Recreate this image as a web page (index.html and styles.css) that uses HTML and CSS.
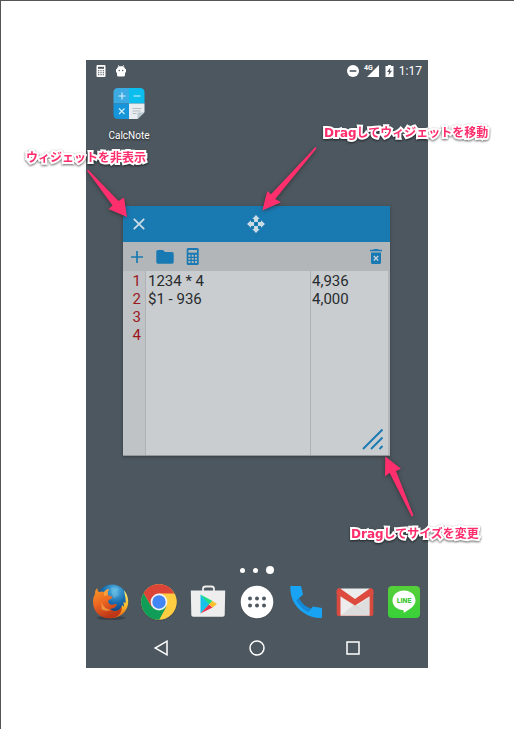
FILE: index.html
```html
<!DOCTYPE html>
<html lang="ja">
<head>
<meta charset="utf-8">
<meta name="viewport" content="width=device-width, initial-scale=1">
<title>CalcNote</title>
<link rel="stylesheet" href="styles.css">
</head>
<body>
<main class="stage">
  <section class="phone">
    <header class="status">
      <svg width="10" height="12" viewBox="0 0 10 12"><rect x=".5" width="9" height="12" rx="1" fill="#fff"/><path d="M2 1.8h6v2H2z" fill="#4d575f"/><path d="M2 5.8h6M2 7.8h6M2 9.8h6" stroke="#4d575f" stroke-width="1.1" stroke-dasharray="1.3 1.05"/></svg>
      <svg class="droid" width="12" height="12" viewBox="0 0 12 12"><path d="M1 4h1C2 2.700 2.800 2 3.700 1.500L3 .4l.5-.3.9 1.100h3.200L8.500.100l.5.3-.7 1.100C9.200 2 10 2.700 10 4h1v3.500h-1V10q0 1.500-1.500 1.500h-5Q2 11.500 2 10V7.500H1z" fill="#fff"/><circle cx="4.300" cy="5.500" r=".7" fill="#4d575f"/><circle cx="7.700" cy="5.500" r=".7" fill="#4d575f"/></svg>
      <span class="spacer"></span>
      <svg width="12" height="12" viewBox="0 0 12 12"><circle cx="6" cy="6" r="6" fill="#fff"/><path d="M2.700 6h6.600" stroke="#4d575f" stroke-width="1.600"/></svg>
      <span class="signal"><span class="net">4G</span><svg width="12" height="12" viewBox="0 0 12 12"><path d="M12 0v12H0z" fill="#fff"/></svg></span>
      <svg width="9" height="12" viewBox="0 0 9 12"><path d="M3 0h3v1h2.500v11H.5V1H3z" fill="#fff"/><path d="M5.500 2.500 2 7h2l-.6 3.500L7 5.700H4.900z" fill="#4d575f"/></svg>
      <time class="clock">1:17</time>
    </header>

    <div class="home">
      <a class="app" href="#calcnote">
        <svg width="32" height="32" viewBox="0 0 32 32"><path d="M5 1h11v15.500H.5V5.500Q.5 1 5 1z" fill="#3dabe3"/><path d="M16 1h11q4.500 0 4.500 4.500v11H16z" fill="#0bbeed"/><path d="M.5 16.500H16V32H5Q.5 32 .5 27.500z" fill="#1695da"/><path d="M16 16.500h15.500V25l-7 7H16z" fill="#e7edf0"/><path d="M24.500 32v-6.500h7z" fill="#b9c9cf"/><path d="M5.500 9h7M9 5.500v7M20.500 9h7" stroke="#d5f1fc" stroke-width="1.100"/><path d="m6 21.500 5.500 5.500m0-5.500L6 27" stroke="#d5f1fc" stroke-width="1.100"/><path d="M19.500 21.500h9M19.500 24h8M19.500 26.500h4" stroke="#b4bec3"/></svg>
        <span>CalcNote</span>
      </a>
    </div>

    <section class="widget" aria-label="CalcNote">
      <div class="titlebar">
        <button class="close" aria-label="閉じる"><svg width="14" height="14" viewBox="0 0 14 14"><path d="m1.800 1.800 10.400 10.400m0-10.400L1.800 12.200" stroke="#cbdbe4" stroke-width="1.800"/></svg></button>
        <button class="move" aria-label="移動"><svg width="18" height="18" viewBox="0 0 18 18" fill="#cbdbe4"><path d="M9 0l3.800 4H11v3H7V4H5.200zM9 18l-3.800-4H7v-3h4v3h1.800zM0 9l4-3.800V7h3v4H4v1.800zM18 9l-4 3.800V11h-3V7h3V5.200z"/></svg></button>
      </div>
      <div class="toolbar">
        <button aria-label="追加"><svg width="14" height="14" viewBox="0 0 14 14"><path d="M7 1v12M1 7h12" stroke="#197ab3" stroke-width="1.700"/></svg></button>
        <button aria-label="フォルダ"><svg width="18" height="14" viewBox="0 0 18 14"><path d="M2 0h5l2 2h7q1.700 0 1.700 1.700V12q0 1.700-1.700 1.700H2Q.3 13.700.3 12V1.700Q.3 0 2 0z" fill="#197ab3"/></svg></button>
        <button aria-label="電卓"><svg width="13" height="17" viewBox="0 0 13 17"><rect x=".7" width="12" height="17" rx="1.500" fill="#197ab3"/><path d="M2.400 2H11v2.700H2.400z" fill="#b2b6b9"/><path d="M2.400 7.800h8.600M2.400 10.900h8.600M2.400 14h8.600" stroke="#b2b6b9" stroke-width="1.900" stroke-dasharray="2 1.300"/></svg></button>
        <span class="spacer"></span>
        <button aria-label="削除"><svg width="12" height="15" viewBox="0 0 12 15"><path d="M0 .8h3.500L4 0h4l.5.800H12v1.500H0zM1 3.500h10v10q0 1.500-1.500 1.500h-7Q1 15 1 13.500z" fill="#197ab3"/><path d="m3.800 7 4.400 4.400m0-4.400-4.400 4.400" stroke="#c5d1d8" stroke-width="1.400"/></svg></button>
      </div>
      <div class="sheet">
        <div class="gutter">1<br>2<br>3<br>4</div>
        <textarea class="notes" aria-label="計算式" spellcheck="false">1234 * 4
$1 - 936</textarea>
        <output class="results">4,936<br>4,000</output>
        <svg class="grip" width="22" height="22" viewBox="0 0 22 22"><path d="M1 21 20.500 1.500M9 21 20.500 9.500M17.500 21l3-3" stroke="#197ab3" stroke-width="1.900"/></svg>
      </div>
    </section>

    <div class="pager"><i></i><i></i><i class="current"></i></div>

    <nav class="dock" aria-label="アプリ">
      <a href="#firefox" aria-label="Firefox"><svg width="38" height="38" viewBox="0 0 38 38">
        <defs>
          <radialGradient id="globe" cx=".6" cy=".2" r=".8"><stop offset="0" stop-color="#59bce9"/><stop offset=".5" stop-color="#176aac"/><stop offset="1" stop-color="#142e67"/></radialGradient>
          <linearGradient id="fur" x1="0" y1="0" x2=".4" y2="1"><stop offset="0" stop-color="#f79a26"/><stop offset=".5" stop-color="#ed6822"/><stop offset="1" stop-color="#bd3618"/></linearGradient>
          <linearGradient id="tail" x1="0" y1="0" x2="0" y2="1"><stop offset="0" stop-color="#fff178"/><stop offset=".6" stop-color="#f8b526"/><stop offset="1" stop-color="#df5b1b"/></linearGradient>
        </defs>
        <g transform="translate(1 0)">
        <ellipse cx="19" cy="35" rx="14" ry="2" fill="#3b4248"/>
        <circle cx="20" cy="17" r="15.500" fill="url(#globe)"/>
        <path d="M19 5q5-2 8 1l-3 3 3 3-5 3-2-4z" fill="#72c0df" opacity=".5"/>
        <path d="M32 7.500c5 5 6 15 .5 21.500-4 5-11 7-17 5l5-6c6 1 9-2 9.500-6l2 2-.5-5 2 1c.5-4-.5-8-1.500-12.500z" fill="url(#tail)"/>
        <path d="M5 5q.5 3 2 4 3-1 5 0 2-3 5-3-2 3-1 6 2 1.500 4.500 1.500-.5 2.500-4 3.500-1 2 1 4c2.500 2 4-.5 7 0 1 1-2 5-6.500 5 4 4 10 2 12-3 0 7-4 11-9 12C9 37 1 29 1 19q0-5 2-8Q3 7 5 5z" fill="url(#fur)"/>
        <path d="M12 9q2-3 5-3-2 3-1 6l-4 1zM9.500 19q2 7 10 8-7 2-10-1z" fill="#fbb34b" opacity=".65"/>
        </g>
      </svg></a>
      <a href="#chrome" aria-label="Chrome"><svg width="38" height="38" viewBox="0 0 38 38">
        <ellipse cx="19" cy="20" rx="18" ry="17.800" fill="#404950"/><circle cx="19" cy="19" r="17.800" fill="#ffcd42"/>
        <path d="M3.600 10.100A17.800 17.800 0 0 0 19.200 36.800L26.500 23.500 19 19 11.500 23.500z" fill="#0f9d58"/>
        <path d="M3.600 10.100A17.800 17.800 0 0 1 34.500 10.500H19L11.500 23.500z" fill="#db4437"/>
        <circle cx="19" cy="19" r="8.400" fill="#f1f1f1"/><circle cx="19" cy="19" r="6.700" fill="#4285f4"/>
      </svg></a>
      <a href="#play" aria-label="Play"><svg width="36" height="38" viewBox="0 0 36 38">
        <rect x="13" y="3.500" width="11" height="7" rx="2.500" fill="none" stroke="#eeeeef" stroke-width="1.800"/>
        <path d="M.8 7.500h34.400L34.700 32q0 1.700-2 1.700H3.300q-2 0-2-1.700z" fill="#eeeeef"/>
        <path d="M10.500 11.500v19l9-9.500z" fill="#18c1e8"/><path d="m10.500 11.500 12 6.500-3.500 3.500z" fill="#20dc85"/><path d="m10.500 30.500 8.500-9 3.500 2.900z" fill="#e8324c"/><path d="M22.500 18 27 21l-4.500 3.400L19 21.300z" fill="#fcc12d"/>
      </svg></a>
      <a href="#apps" aria-label="アプリ一覧"><svg width="38" height="38" viewBox="0 0 38 38"><circle cx="19" cy="20" r="16.300" fill="#424b52"/><circle cx="19" cy="19" r="16.300" fill="#fff"/><g fill="#4d5860"><circle cx="12" cy="15.500" r="2"/><circle cx="19" cy="15.500" r="2"/><circle cx="26" cy="15.500" r="2"/><circle cx="12" cy="22.500" r="2"/><circle cx="19" cy="22.500" r="2"/><circle cx="26" cy="22.500" r="2"/></g></svg></a>
      <a href="#phone" aria-label="電話"><svg width="38" height="38" viewBox="0 0 38 38"><path d="M3.300 3H14l2 8.500-6.500 6Q15 26 21.500 28.500L26 23.500l9 1.500v10Q24 35.500 15.500 29 3 20 3.300 3z" fill="#18a3f4"/><path d="m9.500 17.500 2.500-2.300q4 8 12 10.300l-2.500 3Q14 25 9.500 17.500z" fill="#128bdc"/></svg></a>
      <a href="#gmail" aria-label="Gmail"><svg width="38" height="38" viewBox="0 0 38 38"><rect x=".7" y="6" width="36.600" height="27" rx="2" fill="#d94a3e"/><path d="M4.500 5.500h29V32.500h-29z" fill="#ededed"/><path d="M4.500 32.500 19 21l14.500 11.500z" fill="#dcdcdc"/><path d="M4.500 14 19 24l14.500-10v18.500z" fill="#d3d3d3" opacity=".6"/><path d="M.7 11V7.500Q1 5 3.500 5L19 16 34.500 5q2.500 0 2.800 2.500V11L19 22.500z" fill="#dd4b3e"/></svg></a>
      <a href="#line" aria-label="LINE"><svg width="34" height="34" viewBox="0 0 34 34"><defs><linearGradient id="lime" x1="0" y1="0" x2="0" y2="1"><stop offset="0" stop-color="#56cf39"/><stop offset="1" stop-color="#38d039"/></linearGradient></defs><rect x="1" y="1" width="32" height="32" rx="4" fill="url(#lime)"/><path d="M17 5.500c6.500 0 11.500 4.200 11.500 10 0 5-5 8.500-12 12.500.7-2 .3-2.800-1-3C9.500 24.500 5.500 20.500 5.500 15.500c0-5.800 5-10 11.500-10z" fill="#fff"/><text x="17" y="18" class="line-word">LINE</text></svg></a>
    </nav>

    <nav class="keys" aria-label="ナビゲーション">
      <button aria-label="戻る"><svg width="16" height="16" viewBox="0 0 16 16"><path d="M14 1.200v13.600L2.200 8z"/></svg></button>
      <button aria-label="ホーム"><svg width="16" height="16" viewBox="0 0 16 16"><circle cx="8" cy="8" r="7"/></svg></button>
      <button aria-label="履歴"><svg width="16" height="16" viewBox="0 0 16 16"><path d="M2 2h12v12H2z"/></svg></button>
    </nav>
  </section>

  <svg class="arrows" width="514" height="729" viewBox="0 0 514 729" aria-hidden="true">
    <path d="M88 169.500 118.500 201 124 197.500 127 217 108.500 209 112.500 205.500 87 170.500z"/>
    <path d="M315.500 147 271 194.300 267.300 191 262.300 210.500 281 202.300 275.300 199 316.500 148.500z"/>
    <path d="M385.300 456.500 385 476.300 389.700 473 411.700 516.500 413.500 515.500 396 471 401 468.700z"/>
  </svg>
  <p class="note note-hide">ウィジェットを非表示</p>
  <p class="note note-move">Dragしてウィジェットを移動</p>
  <p class="note note-size">Dragしてサイズを変更</p>
</main>
</body>
</html>
```

FILE: styles.css
```css
* { box-sizing: border-box; }

body {
  margin: 0;
  background: #fff;
  font-family: Roboto, "Noto Sans CJK JP", sans-serif;
}

svg { display: block; }

button {
  padding: 0;
  border: 0;
  background: none;
  cursor: pointer;
}

.stage {
  position: relative;
  min-height: 100vh;
  padding: 59px 86px 60px 85px;
  border-top: 1px solid #555;
  border-left: 1px solid #555;
}

.phone {
  display: flex;
  flex-direction: column;
  background: #4d575f;
}

.spacer { flex: 1; }

.status {
  display: flex;
  align-items: center;
  height: 22px;
  padding: 0 6px 0 10px;
  color: #fff;
}

.droid { margin-left: 9px; }

.signal {
  display: flex;
  margin: 0 6px 0 5px;
}

.net {
  margin-right: -6px;
  font-size: 7px;
  font-weight: 700;
  line-height: 6px;
}

.clock {
  margin-left: 5px;
  font-size: 12px;
}

.home {
  height: 124px;
  padding: 5px 19px;
}

.app {
  display: inline-flex;
  flex-direction: column;
  align-items: center;
  gap: 10px;
  width: 48px;
  color: #fff;
  font-size: 10px;
  line-height: 14px;
  text-decoration: none;
  text-shadow: 0 1px 2px #222;
}

.widget {
  margin: 0 38px 0 37px;
  border-bottom: 1px solid #92989c;
  background: #b2b6b9;
  box-shadow: 0 1px 3px #353d43;
}

.titlebar {
  display: grid;
  grid-template-columns: 1fr auto 1fr;
  align-items: center;
  height: 36px;
  padding: 0 10px 0 9px;
  background: #197ab1;
}

.close { justify-self: start; }

.toolbar {
  display: flex;
  align-items: center;
  gap: 12px;
  height: 29px;
  padding: 0 8px 0 7px;
}

.sheet {
  position: relative;
  display: grid;
  grid-template-columns: 23px 2fr minmax(0, 78px);
  height: 184px;
  border-right: 2px solid #b2b6b9;
  background: #c9cdd0;
  color: #282b2d;
  font-size: 15px;
  line-height: 18px;
}

.gutter {
  padding: 1px 4px 0 0;
  border-right: 1px solid #aeb2b5;
  background: #bfc3c6;
  color: #9c171d;
  text-align: right;
}

.notes {
  width: 100%;
  min-width: 0;
  height: 100%;
  padding: 1px 2px 0;
  border: 0;
  outline: 0;
  resize: none;
  background: none;
  color: inherit;
  font: inherit;
}

.results {
  padding: 1px 0 0 1px;
  border-left: 1px solid #aeb2b5;
}

.grip {
  position: absolute;
  right: 4px;
  bottom: 5px;
}

.pager {
  display: flex;
  justify-content: center;
  align-items: center;
  gap: 8px;
  height: 12px;
  margin-top: 108px;
}

.pager i {
  width: 5px;
  height: 5px;
  border-radius: 50%;
  background: #fff;
}

.pager .current {
  width: 8px;
  height: 8px;
}

.dock {
  display: grid;
  grid-template-columns: repeat(7, 1fr);
  place-items: center;
  height: 52px;
}

.line-word {
  fill: #45c837;
  font-family: Roboto, sans-serif;
  font-size: 7px;
  font-weight: 900;
  text-anchor: middle;
}

.keys {
  display: grid;
  grid-template-columns: repeat(3, 1fr);
  place-items: center;
  height: 40px;
  padding: 0 27px;
}

.keys svg {
  fill: none;
  stroke: #fff;
  stroke-width: 1.5;
}

.arrows {
  position: absolute;
  top: -1px;
  left: -1px;
  pointer-events: none;
  fill: #ff2f6e;
  filter: drop-shadow(0 1px 2px #222a);
}

.note {
  position: absolute;
  margin: 0;
  color: #ff2d6c;
  font-family: "DejaVu Sans", "Noto Sans CJK JP", sans-serif;
  font-size: 12px;
  font-weight: 700;
  line-height: 16px;
  white-space: nowrap;
  paint-order: stroke fill;
  -webkit-text-stroke: 4px #fff;
  filter: drop-shadow(0 1px 1px #0009);
}

.note-hide { top: 149px; left: 25px; }
.note-move { top: 124px; left: 323px; }
.note-size { top: 525px; left: 350px; }
```
